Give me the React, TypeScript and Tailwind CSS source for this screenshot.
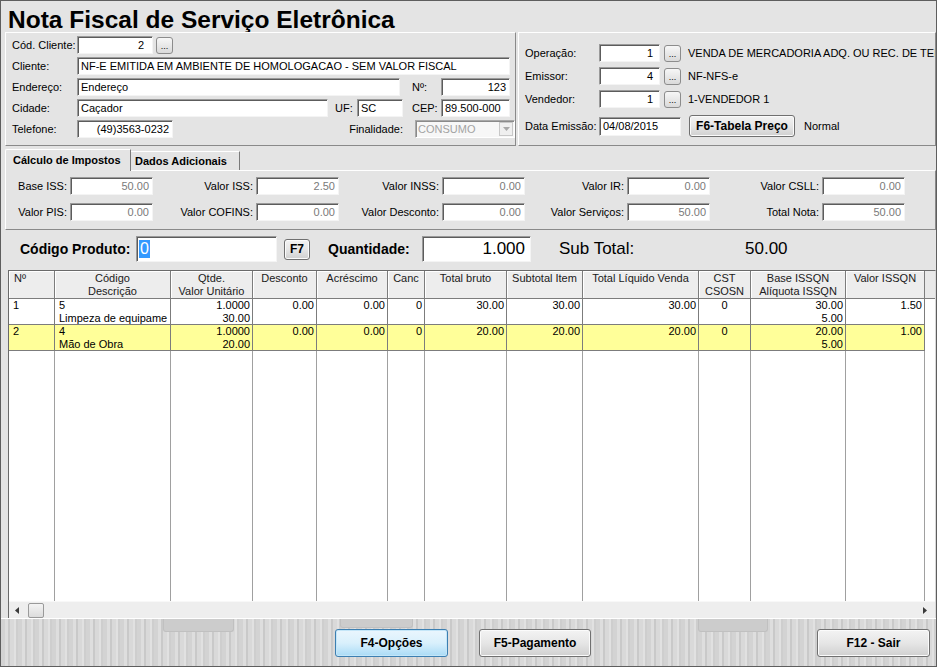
import React from 'react'

const sunken =
  'bg-white border border-t-[#9a9a9a] border-l-[#9a9a9a] border-r-[#f4f4f4] border-b-[#f4f4f4] shadow-[inset_1px_1px_0_#5c5c5c]'
const raised = 'border border-t-white border-l-white border-r-[#8a8a8a] border-b-[#8a8a8a]'

type BoxProps = {
  className?: string
  right?: boolean
  gray?: boolean
  children?: React.ReactNode
}

function Box({ className = '', right, gray, children }: BoxProps) {
  return (
    <div
      className={`${sunken} h-[18px] shrink-0 flex items-center px-[3px] overflow-hidden whitespace-nowrap ${
        right ? 'justify-end' : ''
      } ${gray ? 'text-[#7a7a7a]' : ''} ${className}`}
    >
      {children}
    </div>
  )
}

function Dots({ className = '' }: { className?: string }) {
  return (
    <div
      className={`w-[17px] h-[17px] shrink-0 rounded-[3px] border border-[#8c8c8c] bg-linear-to-b from-[#f7f7f7] to-[#dadada] flex items-end justify-center text-[9px] leading-[11px] pb-[1px] ${className}`}
    >
      ...
    </div>
  )
}

function TaxField({ label, value, lw }: { label: string; value: string; lw: string }) {
  return (
    <div className="flex items-center">
      <span className={`${lw} shrink-0 text-right pr-[3px] whitespace-nowrap`}>{label}</span>
      <Box className="w-[83px]" right gray>
        {value}
      </Box>
    </div>
  )
}

const cols = [
  { w: 'w-[46px]', h: ['Nº'], a: 'left' },
  { w: 'w-[116px]', h: ['Código', 'Descrição'], a: 'left' },
  { w: 'w-[82px]', h: ['Qtde.', 'Valor Unitário'], a: 'right' },
  { w: 'w-[64px]', h: ['Desconto'], a: 'right' },
  { w: 'w-[71px]', h: ['Acréscimo'], a: 'right' },
  { w: 'w-[37px]', h: ['Canc'], a: 'right' },
  { w: 'w-[82px]', h: ['Total bruto'], a: 'right' },
  { w: 'w-[76px]', h: ['Subtotal Item'], a: 'right' },
  { w: 'w-[116px]', h: ['Total Líquido Venda'], a: 'right' },
  { w: 'w-[52px]', h: ['CST', 'CSOSN'], a: 'center' },
  { w: 'w-[95px]', h: ['Base ISSQN', 'Alíquota ISSQN'], a: 'right' },
  { w: 'w-[79px]', h: ['Valor ISSQN'], a: 'right' },
]

const rows = [
  {
    bg: 'bg-white',
    cells: [['1'], ['5', 'Limpeza de equipame'], ['1.0000', '30.00'], ['0.00'], ['0.00'], ['0'], ['30.00'], ['30.00'], ['30.00'], ['0'], ['30.00', '5.00'], ['1.50']],
  },
  {
    bg: 'bg-[#ffff99]',
    cells: [['2'], ['4', 'Mão de Obra'], ['1.0000', '20.00'], ['0.00'], ['0.00'], ['0'], ['20.00'], ['20.00'], ['20.00'], ['0'], ['20.00', '5.00'], ['1.00']],
  },
]

const alignCls: Record<string, string> = {
  left: 'text-left pl-[4px]',
  right: 'text-right pr-[2px]',
  center: 'text-center',
}

function WinButton({ children, className = '', blue }: { children: React.ReactNode; className?: string; blue?: boolean }) {
  return (
    <div
      className={`h-[28px] shrink-0 rounded-[3px] flex items-center justify-center font-bold text-[12px] ${
        blue
          ? 'border border-[#3c7fb1] bg-linear-to-b from-[#eaf6fd] via-[#d9f0fc] to-[#a9dbf6] shadow-[inset_0_0_0_1px_#c4e6f8]'
          : 'border border-[#707070] bg-linear-to-b from-[#f3f3f3] via-[#e6e6e6] to-[#d0d0d0] shadow-[inset_0_0_0_1px_#fbfbfb]'
      } ${className}`}
    >
      {children}
    </div>
  )
}

export default function App() {
  return (
    <div className="w-[937px] h-[667px] bg-[#e4e4e4] border border-[#5e5e5e] flex flex-col font-['Liberation_Sans',Arial,sans-serif] text-[11px] text-black overflow-hidden">
      {/* Title */}
      <div className="h-[31px] shrink-0 pl-[7px] pt-[7px] text-[24.5px] leading-[24px] font-bold whitespace-nowrap">
        Nota Fiscal de Serviço Eletrônica
      </div>

      {/* Header panels */}
      <div className="flex pl-[4px] gap-[2px] h-[114px] shrink-0">
        <div className={`${raised} w-[511px] flex flex-col gap-[3px] pl-[6px] pt-[3px]`}>
          <div className="flex items-center h-[18px]">
            <span className="w-[65px] shrink-0">Cód. Cliente:</span>
            <Box className="w-[76px]" right>
              <span className="pr-[5px]">2</span>
            </Box>
            <Dots className="ml-[3px]" />
          </div>
          <div className="flex items-center h-[18px]">
            <span className="w-[65px] shrink-0">Cliente:</span>
            <Box className="w-[433px]">NF-E EMITIDA EM AMBIENTE DE HOMOLOGACAO - SEM VALOR FISCAL</Box>
          </div>
          <div className="flex items-center h-[18px]">
            <span className="w-[65px] shrink-0">Endereço:</span>
            <Box className="w-[323px]">Endereço</Box>
            <span className="ml-[12px] w-[29px] shrink-0">Nº:</span>
            <Box className="w-[69px]" right>
              123
            </Box>
          </div>
          <div className="flex items-center h-[18px]">
            <span className="w-[65px] shrink-0">Cidade:</span>
            <Box className="w-[251px]">Caçador</Box>
            <span className="ml-[7px] w-[22px] shrink-0">UF:</span>
            <Box className="w-[46px]">SC</Box>
            <span className="ml-[9px] w-[29px] shrink-0">CEP:</span>
            <Box className="w-[69px]">89.500-000</Box>
          </div>
          <div className="flex items-center h-[18px]">
            <span className="w-[65px] shrink-0">Telefone:</span>
            <Box className="w-[96px]" right>
              (49)3563-0232
            </Box>
            <span className="flex-1 text-right pr-[12px]">Finalidade:</span>
            <div className="w-[100px] h-[18px] shrink-0 flex items-center bg-[#f7f7f7] border border-t-[#a8a8a8] border-l-[#a8a8a8] border-r-white border-b-white shadow-[inset_1px_1px_0_#8a8a8a]">
              <span className="flex-1 pl-[2px] text-[#a3a3a3]">CONSUMO</span>
              <div className="w-[14px] h-[14px] mr-[1px] border border-[#c8c8c8] bg-[#efefef] flex items-center justify-center">
                <svg width="7" height="4" viewBox="0 0 7 4">
                  <path d="M0 0h7L3.5 4z" fill="#a8a8a8" />
                </svg>
              </div>
            </div>
          </div>
        </div>

        <div className={`${raised} w-[418px] flex flex-col pl-[6px] pt-[11px] overflow-hidden whitespace-nowrap`}>
          {[
            ['Operação:', '1', 'VENDA DE MERCADORIA ADQ. OU REC. DE TERCEIROS'],
            ['Emissor:', '4', 'NF-NFS-e'],
            ['Vendedor:', '1', '1-VENDEDOR 1'],
          ].map(([l, v, t], i) => (
            <div key={l} className={`flex items-center h-[18px] ${i > 0 ? 'mt-[5px]' : ''}`}>
              <span className="w-[74px] shrink-0">{l}</span>
              <Box className="w-[61px]" right>
                <span className="pr-[3px]">{v}</span>
              </Box>
              <Dots className="ml-[4px]" />
              <span className="ml-[7px] shrink-0">{t}</span>
            </div>
          ))}
          <div className="flex items-center h-[22px] mt-[7px]">
            <span className="w-[74px] shrink-0">Data Emissão:</span>
            <Box className="w-[82px] h-[19px]">04/08/2015</Box>
            <WinButton className="ml-[8px] w-[106px] !h-[22px]">F6-Tabela Preço</WinButton>
            <span className="ml-[9px]">Normal</span>
          </div>
        </div>
      </div>

      {/* Tabs */}
      <div className="h-[24px] shrink-0 flex items-end pl-[4px]">
        <div className="w-[126px] h-[22px] border-t border-l border-r border-t-white border-l-white border-r-[#7a7a7a] rounded-tl-[2px] flex items-center pl-[7px] font-bold -mb-[1px] bg-[#e4e4e4] z-10">
          Cálculo de Impostos
        </div>
        <div className="w-[109px] h-[19px] border-t border-r border-t-white border-r-[#7a7a7a] flex items-center pl-[4px] font-bold">
          Dados Adicionais
        </div>
      </div>
      <div className={`${raised} ml-[4px] w-[931px] h-[60px] shrink-0 flex flex-col gap-[8px] pt-[6px]`}>
        <div className="flex">
          <TaxField label="Base ISS:" value="50.00" lw="w-[64px]" />
          <TaxField label="Valor ISS:" value="2.50" lw="w-[103px]" />
          <TaxField label="Valor INSS:" value="0.00" lw="w-[103px]" />
          <TaxField label="Valor IR:" value="0.00" lw="w-[102px]" />
          <TaxField label="Valor CSLL:" value="0.00" lw="w-[112px]" />
        </div>
        <div className="flex">
          <TaxField label="Valor PIS:" value="0.00" lw="w-[64px]" />
          <TaxField label="Valor COFINS:" value="0.00" lw="w-[103px]" />
          <TaxField label="Valor Desconto:" value="0.00" lw="w-[103px]" />
          <TaxField label="Valor Serviços:" value="50.00" lw="w-[102px]" />
          <TaxField label="Total Nota:" value="50.00" lw="w-[112px]" />
        </div>
      </div>

      {/* Product entry */}
      <div className="mt-[6px] h-[26px] shrink-0 flex items-center pl-[19px] whitespace-nowrap">
        <span className="w-[116px] shrink-0 text-[14px] font-bold">Código Produto:</span>
        <div className={`${sunken} w-[141px] h-[26px] shrink-0 flex items-center pl-[2px] text-[16px]`}>
          <span className="bg-[#3399ff] text-white leading-[18px] px-[1px]">0</span>
        </div>
        <WinButton className="ml-[7px] w-[26px] !h-[21px] !text-[12px]">F7</WinButton>
        <span className="ml-[18px] w-[94px] shrink-0 text-[14px] font-bold">Quantidade:</span>
        <div className={`${sunken} w-[109px] h-[26px] shrink-0 flex items-center justify-end pr-[5px] text-[17px]`}>1.000</div>
        <span className="ml-[28px] w-[186px] shrink-0 text-[17px]">Sub Total:</span>
        <span className="text-[17px]">50.00</span>
      </div>

      {/* Grid */}
      <div className="mt-[8px] ml-[7px] w-[928px] h-[348px] shrink-0 flex flex-col bg-white border-l border-t border-[#6a6a6a] border-r border-r-[#d8d8d8]">
        <div className="flex h-[28px] shrink-0 bg-[#e8e8e8]">
          {cols.map((c, i) => (
            <div
              key={i}
              className={`${c.w} shrink-0 h-[28px] border-r border-b border-[#7c7c7c] bg-[#ededed] shadow-[inset_1px_1px_0_#ffffff] leading-[13px] pt-[1px] text-[#202020] whitespace-nowrap overflow-hidden ${
                i === 0 ? 'text-left pl-[5px]' : 'text-center'
              }`}
            >
              {c.h.map((t) => (
                <div key={t}>{t}</div>
              ))}
            </div>
          ))}
          <div className="flex-1 border-b border-[#7c7c7c]" />
        </div>
        {rows.map((r, ri) => (
          <div key={ri} className={`flex h-[26px] shrink-0 ${r.bg}`}>
            {cols.map((c, i) => (
              <div
                key={i}
                className={`${c.w} shrink-0 h-[26px] border-r border-b border-[#7c7c7c] leading-[13px] whitespace-nowrap overflow-hidden ${alignCls[c.a]}`}
              >
                {r.cells[i].map((t) => (
                  <div key={t}>{t}</div>
                ))}
              </div>
            ))}
            <div className="flex-1 bg-white" />
          </div>
        ))}
        <div className="flex flex-1">
          {cols.map((c, i) => (
            <div key={i} className={`${c.w} shrink-0 border-r border-[#a0a0a0]`} />
          ))}
          <div className="flex-1" />
        </div>
        <div className="h-[17px] shrink-0 bg-[#eeeeee] border-t border-[#f8f8f8] flex items-center pl-[6px] pr-[8px]">
          <svg width="4" height="7" viewBox="0 0 4 7">
            <path d="M4 0v7L0 3.5z" fill="#3a3a3a" />
          </svg>
          <div className="ml-[9px] w-[16px] h-[15px] rounded-[2px] border border-[#9a9a9a] bg-linear-to-b from-[#f4f4f4] to-[#dcdcdc]" />
          <div className="flex-1" />
          <svg width="4" height="7" viewBox="0 0 4 7">
            <path d="M0 0v7l4-3.5z" fill="#3a3a3a" />
          </svg>
        </div>
      </div>

      {/* Bottom bar */}
      <div className="relative flex-1 flex items-start pt-[10px] border-t border-white bg-[repeating-linear-gradient(90deg,#d3d3d3_0px,#d3d3d3_4px,#dedede_4px,#dedede_7px,#c9c9c9_7px,#c9c9c9_9px,#d9d9d9_9px,#d9d9d9_13px,#e1e1e1_13px,#e1e1e1_15px,#cecece_15px,#cecece_17px)]">
        <div className="absolute top-0 left-[162px] w-[71px] h-[13px] rounded-b-[3px] bg-[#cccccc] border border-t-0 border-[#c0c0c0]" />
        <div className="absolute top-0 left-[339px] w-[73px] h-[9px] rounded-b-[3px] bg-[#cccccc] border border-t-0 border-[#c0c0c0]" />
        <div className="absolute top-0 left-[697px] w-[70px] h-[13px] rounded-b-[3px] bg-[#cccccc] border border-t-0 border-[#c0c0c0]" />
        <WinButton blue className="ml-[334px] w-[113px] relative">
          F4-Opções
        </WinButton>
        <WinButton className="ml-[31px] w-[112px]">F5-Pagamento</WinButton>
        <WinButton className="ml-[226px] w-[113px]">F12 - Sair</WinButton>
      </div>
    </div>
  )
}
